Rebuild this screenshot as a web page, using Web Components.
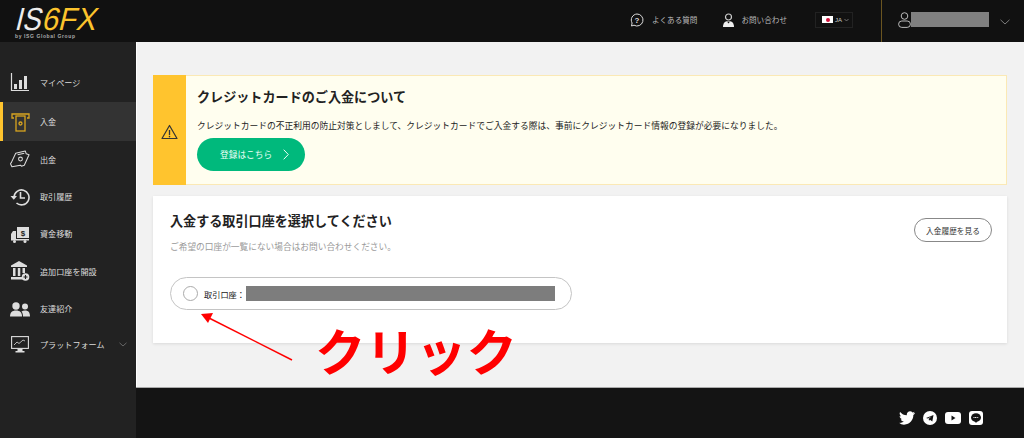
<!DOCTYPE html>
<html lang="ja">
<head>
<meta charset="utf-8">
<title>IS6FX</title>
<style>
    html, body {
        margin: 0;
        height: 100%;
        overflow: hidden;
        background: #f2f2f2;
        font-family: "Noto Sans CJK JP", "Noto Sans", sans-serif;
    }
</style>
</head>
<body>
<app-shell>
    <top-bar slot="top"></top-bar>
    <side-nav slot="side">
        <nav-item h="40" label="マイページ" icon="chart"></nav-item>
        <nav-item h="39" label="入金" icon="atm" active></nav-item>
        <nav-item h="37" label="出金" icon="cash"></nav-item>
        <nav-item h="37" label="取引履歴" icon="history"></nav-item>
        <nav-item h="37" label="資金移動" icon="truck"></nav-item>
        <nav-item h="38" label="追加口座を開設" icon="bank"></nav-item>
        <nav-item h="37" label="友達紹介" icon="users"></nav-item>
        <nav-item h="34" label="プラットフォーム" icon="monitor" more></nav-item>
    </side-nav>
    <alert-box slot="main"></alert-box>
    <account-card slot="main"></account-card>
    <site-footer slot="foot"></site-footer>
    <click-note slot="over"></click-note>
</app-shell>

<script>
const ICONS = {
    chart: `<path d="M1.500 1v17.500H19" fill="none" stroke="#ddd" stroke-width="1.200"/><rect x="4" y="12" width="3" height="5" fill="#ddd"/><rect x="9" y="8" width="3" height="9" fill="#ddd"/><rect x="14" y="4" width="3" height="13" fill="#ddd"/>`,
    atm: `<g fill="none" stroke="#d9a520" stroke-width="1.300"><path d="M3 6H1V2h17v4h-2"/><rect x="5" y="4" width="9" height="15"/><circle cx="9.500" cy="11.500" r="1.500"/></g>`,
    cash: `<g fill="none" stroke="#ddd" stroke-width="1.100" stroke-linejoin="round"><path d="M6 3l10-2.500 1 3 3 1-5 11-3 1-1-1-9 1.500-1.500-3 1-1.500z"/><path d="M8 4.500l7-1.500"/><circle cx="11" cy="9" r="2"/></g>`,
    history: `<g fill="none" stroke="#ddd" stroke-width="1.600"><path d="M4 10a7.500 7.500 0 1 1 2.500 6"/><path d="M10.500 5v6h4.500"/></g><path d="M0.500 9h6.500l-3.200 3.800z" fill="#ddd"/>`,
    truck: `<rect x="7" y="2" width="12" height="11" fill="#ddd"/><path d="M1 9l2-3h3v8H1z" fill="#ddd"/><rect x="1" y="14" width="18" height="1.500" fill="#ddd"/><circle cx="4.500" cy="16.500" r="1.500" fill="#ddd"/><circle cx="15" cy="16.500" r="1.500" fill="#ddd"/><text x="13" y="11" font-size="8" text-anchor="middle" font-family="Liberation Sans" font-weight="700" fill="#222">$</text>`,
    bank: `<path d="M9 0L1 4.500V6h16V4.500z" fill="#ddd"/><g fill="#ddd"><rect x="3" y="7" width="2.500" height="8"/><rect x="7.800" y="7" width="2.500" height="8"/><rect x="12.500" y="7" width="2.500" height="5"/><rect x="1" y="16" width="12" height="2.500"/></g><circle cx="15.500" cy="16" r="3.800" fill="#ddd"/><path d="M15.500 14v4M13.500 16h4" stroke="#222" stroke-width="1.100"/>`,
    users: `<g fill="#ddd"><circle cx="6" cy="5" r="3.700"/><circle cx="15" cy="5.500" r="3"/><path d="M0 15.500c0-4 2-6 6-6s6 2 6 6z"/><path d="M13 15.500c0-2-.4-3.800-1.500-5 1-.7 2.200-1 3.500-1 3.500 0 5 2 5 6z"/></g>`,
    monitor: `<g fill="none" stroke="#ddd" stroke-width="1.100"><rect x="0.600" y="0.600" width="16.800" height="11.800"/><path d="M3 9l3-3 2 1.500 4-3.500 2 1" stroke-width=".8"/></g><rect x="6.500" y="13" width="5" height="2" fill="#ddd"/><rect x="4.500" y="15" width="9" height="1.500" fill="#ddd"/>`
};

const ICON_BOX = {
    chart: [20, 20], atm: [19, 20], cash: [21, 19], history: [20, 19],
    truck: [20, 18], bank: [20, 20], users: [20, 16], monitor: [18, 17]
};

class AppShell extends HTMLElement {
    constructor() {
        super();
        this.attachShadow({mode: 'open'}).innerHTML = `
            <style>
                :host {
                    display: grid;
                    position: relative;
                    width: 1024px;
                    height: 438px;
                    overflow: hidden;
                    grid-template-columns: 136px 1fr;
                    grid-template-rows: 42px 345px 51px;
                    grid-template-areas: "top top" "side main" "side foot";
                }
                #top { grid-area: top; }
                #side { grid-area: side; display: flex; }
                #main {
                    grid-area: main;
                    display: flex;
                    flex-direction: column;
                    gap: 11px;
                    padding: 33px 17px 0 16px;
                    border-left: 1px solid #fff;
                    background: #f2f2f2;
                }
                #foot { grid-area: foot; }
            </style>
            <div id="top"><slot name="top"></slot></div>
            <div id="side"><slot name="side"></slot></div>
            <div id="main"><slot name="main"></slot></div>
            <div id="foot"><slot name="foot"></slot></div>
            <slot name="over"></slot>
        `;
    }
}

class TopBar extends HTMLElement {
    constructor() {
        super();
        this.attachShadow({mode: 'open'}).innerHTML = `
            <style>
                :host {
                    display: flex;
                    align-items: center;
                    height: 42px;
                    box-sizing: border-box;
                    background: #111;
                    color: #bbb;
                    font-size: 7.600px;
                }
                svg { display: block; flex: none; }
                .logo { margin: 0 0 0 14px; overflow: visible; }
                .spacer { flex: 1; }
                .link { display: flex; align-items: center; margin-top: -3px; }
                .help { gap: 8px; }
                .support { gap: 7px; margin-left: 26px; }
                .lang {
                    display: flex;
                    align-items: center;
                    width: 38px;
                    height: 16px;
                    margin: -3px 0 0 28px;
                    padding-left: 6px;
                    box-sizing: border-box;
                    border: 1px solid #222;
                    font: 6px "Liberation Sans", sans-serif;
                    color: #ccc;
                }
                .flag {
                    display: flex;
                    align-items: center;
                    justify-content: center;
                    width: 11px;
                    height: 7px;
                    margin-right: 2px;
                    background: #fff;
                }
                .flag i { width: 4px; height: 4px; border-radius: 50%; background: #d3103a; }
                .user {
                    display: flex;
                    align-items: center;
                    width: 143px;
                    height: 42px;
                    margin-left: 28px;
                    padding-left: 16px;
                    box-sizing: border-box;
                    border-left: 1px solid #6b5520;
                }
                .mask { width: 78px; height: 15px; margin-top: -3px; background: #808080; }
                .user svg.person { margin-top: -2px; }
                .user svg.down { margin: 2px 0 0 11px; }
            </style>
            <svg class="logo" width="92" height="40" viewBox="0 0 92 40">
                <g font-family="'Liberation Sans', sans-serif" font-size="32">
                    <text transform="translate(0 29) skewX(-14)" fill="#ececec" textLength="26" lengthAdjust="spacingAndGlyphs">IS</text>
                    <text transform="translate(27 29) skewX(-14)" fill="#fcc32c" textLength="54" lengthAdjust="spacingAndGlyphs">6FX</text>
                </g>
                <text x="1" y="37" fill="#aaa" font-family="Liberation Sans, sans-serif" font-weight="700" font-size="5" letter-spacing=".6">by ISG Global Group</text>
            </svg>
            <div class="spacer"></div>
            <div class="link help">
                <svg width="14" height="14" viewBox="0 0 14 14"><path d="M7 1a6 6 0 1 1-3 11.200L1.500 13l.6-3A6 6 0 0 1 7 1z" fill="none" stroke="#ddd"/><text x="7" y="10" font-size="8" font-family="Liberation Sans" font-weight="700" text-anchor="middle" fill="#ddd">?</text></svg>
                <span>よくある質問</span>
            </div>
            <div class="link support">
                <svg width="11" height="14" viewBox="0 0 11 14"><circle cx="5.500" cy="4" r="3" fill="none" stroke="#ccc" stroke-width="1.200"/><path d="M0 14c0-4 2-6 5.500-6s5.500 2 5.500 6z" fill="#eee"/><path d="M4 8.500h3l-1.500 2z" fill="#111"/></svg>
                <span>お問い合わせ</span>
            </div>
            <div class="lang">
                <span class="flag"><i></i></span>JA
                <svg style="margin-left:2px" width="5" height="4" viewBox="0 0 5 4"><path d="M.5 1l2 2 2-2" fill="none" stroke="#999" stroke-width=".7"/></svg>
            </div>
            <div class="user">
                <svg class="person" width="13" height="16" viewBox="0 0 13 16"><g fill="none" stroke="#ccc" stroke-width=".9"><circle cx="6.500" cy="4" r="3.300"/><rect x=".6" y="9" width="11.800" height="6.400" rx="3.200"/></g></svg>
                <div class="mask"></div>
                <svg class="down" width="10" height="6" viewBox="0 0 10 6"><path d="M.5.8L5 5 9.500.8" fill="none" stroke="#888" stroke-width=".9"/></svg>
            </div>
        `;
    }
}

class SideNav extends HTMLElement {
    constructor() {
        super();
        this.attachShadow({mode: 'open'}).innerHTML = `
            <style>
                :host {
                    display: flex;
                    flex-direction: column;
                    width: 136px;
                    box-sizing: border-box;
                    padding-top: 20px;
                    background: #222;
                }
            </style>
            <slot></slot>
        `;
    }
}

class NavItem extends HTMLElement {
    connectedCallback() {
        if (this.shadowRoot) return;
        const icon = this.getAttribute('icon');
        const box = ICON_BOX[icon];
        this.attachShadow({mode: 'open'}).innerHTML = `
            <style>
                :host {
                    display: flex;
                    align-items: center;
                    height: ${this.getAttribute('h')}px;
                    box-sizing: border-box;
                    color: #ddd;
                    font-size: 8.100px;
                }
                :host([active]) {
                    background: #333;
                    box-shadow: inset 3px 0 0 #ffc42e;
                }
                .ico {
                    display: flex;
                    justify-content: center;
                    width: 20px;
                    margin: 0 10px 0 8px;
                    padding-left: 2px;
                }
                svg { display: block; }
                .more { margin-left: auto; margin-right: 9px; }
            </style>
            <span class="ico"><svg width="${box[0]}" height="${box[1]}" viewBox="0 0 ${box[0]} ${box[1]}">${ICONS[icon]}</svg></span>
            <span>${this.getAttribute('label')}</span>
            ${this.hasAttribute('more') ? `<svg class="more" width="8" height="5" viewBox="0 0 8 5"><path d="M.5.8L4 4 7.500.8" fill="none" stroke="#777" stroke-width=".8"/></svg>` : ''}
        `;
    }
}

class AlertBox extends HTMLElement {
    constructor() {
        super();
        this.attachShadow({mode: 'open'}).innerHTML = `
            <style>
                :host {
                    display: flex;
                    height: 110px;
                    box-sizing: border-box;
                    border: 1px solid #fbe9b5;
                    background: #fffeef;
                    color: #222;
                }
                .side {
                    display: flex;
                    align-items: center;
                    justify-content: center;
                    width: 32px;
                    margin: -1px 0 -1px -1px;
                    padding-right: 1px;
                    background: #ffc42e;
                }
                .side svg { margin-top: 4px; }
                .body { padding: 10px 0 0 11px; }
                h2 { margin: 0; font-size: 13.100px; line-height: 21px; font-weight: 700; letter-spacing: 0; }
                p { margin: 12px 0 0; font-size: 8.760px; line-height: 14px; white-space: nowrap; }
                .btn {
                    display: flex;
                    align-items: center;
                    width: 108px;
                    height: 33px;
                    margin-top: 5px;
                    padding-left: 23px;
                    box-sizing: border-box;
                    border-radius: 17px;
                    background: #00b97c;
                    color: #eafff6;
                    font-size: 8.700px;
                }
                .btn svg { margin-left: 11px; }
            </style>
            <div class="side">
                <svg width="17" height="16" viewBox="0 0 17 16"><path d="M8.500 1.500L16 14.500H1z" fill="none" stroke="#333" stroke-width="1.200" stroke-linejoin="round"/><path d="M8.500 6v5" stroke="#333" stroke-width="1.300"/><circle cx="8.500" cy="12.600" r=".8" fill="#333"/></svg>
            </div>
            <div class="body">
                <h2>クレジットカードのご入金について</h2>
                <p>クレジットカードの不正利用の防止対策としまして、クレジットカードでご入金する際は、事前にクレジットカード情報の登録が必要になりました。</p>
                <div class="btn">登録はこちら<svg width="6" height="11" viewBox="0 0 6 11"><path d="M.7.700L5.300 5.500.7 10.300" fill="none" stroke="#eafff6"/></svg></div>
            </div>
        `;
    }
}

class AccountCard extends HTMLElement {
    constructor() {
        super();
        this.attachShadow({mode: 'open'}).innerHTML = `
            <style>
                :host {
                    display: block;
                    height: 147px;
                    box-sizing: border-box;
                    padding: 14px 15px 0 17px;
                    background: #fff;
                    box-shadow: 0 1px 3px rgba(0,0,0,.1);
                    color: #222;
                }
                .head { display: flex; justify-content: space-between; align-items: flex-start; }
                h2 { margin: 0; font-size: 13.100px; line-height: 21px; font-weight: 700; }
                .sub { margin: 9px 0 0; font-size: 8.700px; line-height: 14px; color: #999; }
                .history {
                    display: flex;
                    align-items: center;
                    justify-content: center;
                    width: 78px;
                    height: 24px;
                    margin-top: 8px;
                    box-sizing: border-box;
                    border: 1px solid #888;
                    border-radius: 12px;
                    font-size: 7.700px;
                    color: #333;
                }
                .pill {
                    display: flex;
                    align-items: center;
                    width: 402px;
                    height: 33px;
                    margin-top: 3px;
                    padding-left: 12px;
                    box-sizing: border-box;
                    border: 1px solid #c4c4c4;
                    border-radius: 17px;
                    background: #fff;
                    font-size: 8.200px;
                }
                .radio {
                    width: 15px;
                    height: 15px;
                    margin-right: 6px;
                    box-sizing: border-box;
                    border: 1px solid #aaa;
                    border-radius: 50%;
                }
                .mask { width: 309px; height: 15px; margin-left: 1px; background: #7d7d7d; }
            </style>
            <div class="head">
                <div>
                    <h2>入金する取引口座を選択してください</h2>
                    <p class="sub">ご希望の口座が一覧にない場合はお問い合わせください。</p>
                </div>
                <div class="history">入金履歴を見る</div>
            </div>
            <div style="height:20px"></div>
            <div class="pill"><span class="radio"></span><span>取引口座：</span><span class="mask"></span></div>
        `;
    }
}

class SiteFooter extends HTMLElement {
    constructor() {
        super();
        this.attachShadow({mode: 'open'}).innerHTML = `
            <style>
                :host {
                    display: flex;
                    align-items: center;
                    justify-content: flex-end;
                    gap: 8px;
                    height: 51px;
                    box-sizing: border-box;
                    padding: 10px 41px 0 0;
                    border-top: 1px solid #aaa;
                    background: #141414;
                }
                svg { display: block; }
            </style>
            <svg width="16" height="14" viewBox="0 0 24 20"><path fill="#fff" d="M24 2.400c-.9.400-1.800.7-2.800.8 1-.6 1.800-1.600 2.200-2.700-1 .6-2 1-3.100 1.200C19.300.7 18 0 16.600 0c-2.700 0-4.900 2.200-4.900 4.900 0 .4 0 .8.100 1.100C7.700 5.800 4.100 3.900 1.700.9 1.200 1.600 1 2.500 1 3.400c0 1.700.9 3.200 2.200 4.100-.8 0-1.600-.2-2.200-.6v.1c0 2.400 1.700 4.400 3.900 4.800-.4.100-.8.200-1.300.2-.3 0-.6 0-.9-.1.6 2 2.400 3.400 4.600 3.400-1.700 1.300-3.800 2.100-6.100 2.100-.4 0-.8 0-1.200-.1C2.200 19.200 4.800 20 7.500 20c9.100 0 14-7.500 14-14v-.6c1-.7 1.800-1.600 2.500-2.500z"/></svg>
            <svg width="14" height="14" viewBox="0 0 14 14"><circle cx="7" cy="7" r="7" fill="#fff"/><path d="M3 7l7.500-3-1.200 6.500-2.300-1.700-1 1-.3-2 3-2.600-3.800 2.300z" fill="#141414"/></svg>
            <svg width="16" height="12" viewBox="0 0 16 12"><rect width="16" height="12" rx="3" fill="#fff"/><path d="M6.500 3.500v5l4-2.500z" fill="#141414"/></svg>
            <svg width="14" height="14" viewBox="0 0 14 14"><rect width="14" height="14" rx="3" fill="#fff"/><ellipse cx="7" cy="6.500" rx="5" ry="4.300" fill="#141414"/><path d="M5.500 10l1.500 2 1.500-2z" fill="#141414"/><path d="M4.500 6.500h5" stroke="#fff" stroke-width="1.200" stroke-dasharray="1 .6"/></svg>
        `;
    }
}

// annotation painted over the screenshot
class ClickNote extends HTMLElement {
    constructor() {
        super();
        this.attachShadow({mode: 'open'}).innerHTML = `
            <style>
                :host { position: absolute; left: 0; top: 0; width: 1024px; height: 438px; pointer-events: none; }
                svg { position: absolute; left: 0; top: 0; }
                span {
                    position: absolute;
                    left: 315px;
                    top: 314px;
                    font-size: 50.500px;
                    line-height: 70px;
                    font-weight: 700;
                    color: #f00;
                    white-space: nowrap;
                }
            </style>
            <svg width="1024" height="438"><path d="M292 360L209 318" stroke="#f00" stroke-width="1.500"/><path d="M201 314l12-1-5 10z" fill="#f00"/></svg>
            <span>クリック</span>
        `;
    }
}

customElements.define('app-shell', AppShell);
customElements.define('top-bar', TopBar);
customElements.define('side-nav', SideNav);
customElements.define('nav-item', NavItem);
customElements.define('alert-box', AlertBox);
customElements.define('account-card', AccountCard);
customElements.define('site-footer', SiteFooter);
customElements.define('click-note', ClickNote);
</script>
</body>
</html>
